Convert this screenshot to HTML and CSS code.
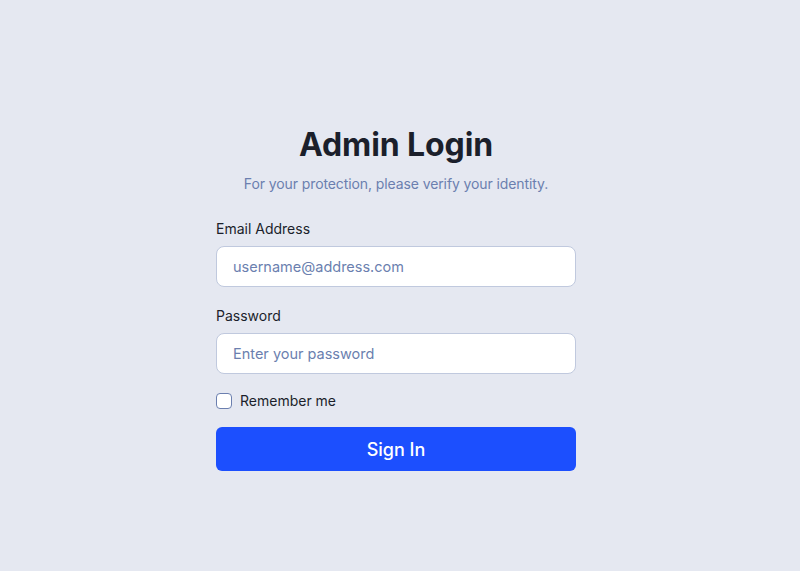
FILE: index.html
```html
<!DOCTYPE html>
<html lang="en">
<head>
<meta charset="utf-8">
<title>Admin Login</title>
<link rel="stylesheet" href="styles.css">
</head>
<body>
<main class="page">
  <form class="card">
    <h1 class="title">Admin Login</h1>
    <p class="subtitle">For your protection, please verify your identity.</p>
    <div class="field">
      <label class="label" for="email">Email Address</label>
      <input class="input" id="email" type="email" placeholder="username@address.com">
    </div>
    <div class="field">
      <label class="label" for="pw">Password</label>
      <input class="input" id="pw" type="password" placeholder="Enter your password">
    </div>
    <label class="remember"><span class="box"></span>Remember me</label>
    <button class="btn" type="button">Sign In</button>
  </form>
</main>
</body>
</html>
```
FILE: styles.css
```css
* { box-sizing: border-box; }
html, body { margin: 0; padding: 0; }
body {
  background: #e5e8f1;
  font-family: Inter, "Noto Sans", sans-serif;
  color: #1b1f2b;
  height: 571px;
}
.page {
  height: 100%;
  display: flex;
  justify-content: center;
  align-items: flex-start;
  padding: 125px 8px 0 0;
}
.card {
  width: 360px;
  display: flex;
  flex-direction: column;
}
.title {
  margin: 0;
  text-align: center;
  font-size: 32px;
  font-weight: 700;
  line-height: 40px;
  color: #1b1f2b;
  letter-spacing: -0.1px;
}
.subtitle {
  margin: 9px 0 26px;
  text-align: center;
  font-size: 14px;
  letter-spacing: -0.1px;
  line-height: 20px;
  color: #6b7faf;
}
.field {
  display: flex;
  flex-direction: column;
  gap: 8px;
  margin-bottom: 20px;
}
.label {
  font-size: 14px;
  line-height: 18px;
  color: #1b1f2b;
}
.input {
  height: 41px;
  border: 1px solid #c0c9de;
  border-radius: 8px;
  background: #fff;
  padding: 0 16px;
  font-family: Inter, sans-serif;
  font-size: 14.5px;
  color: #1b1f2b;
  outline: none;
}
.input::placeholder { color: #6b7faf; }
.remember {
  display: flex;
  align-items: center;
  gap: 8px;
  font-size: 14px;
  line-height: 18px;
  margin-top: -2px;
}
.box {
  width: 16px;
  height: 16px;
  border: 1px solid #6b7faf;
  border-radius: 4px;
  background: #fff;
}
.btn {
  margin-top: 17px;
  height: 44px;
  border: none;
  border-radius: 6px;
  background: #1c4ffe;
  color: #fff;
  font-family: Inter, sans-serif;
  font-size: 18px;
  font-weight: 500;
}
```
